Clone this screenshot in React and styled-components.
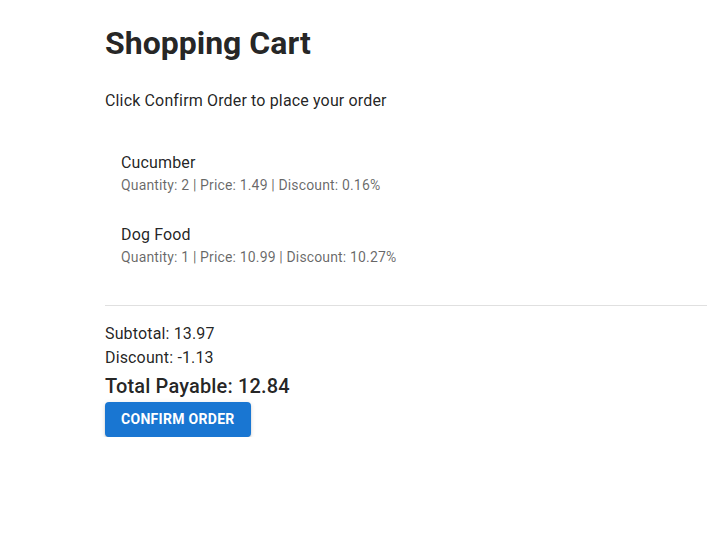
import React from 'react';
import styled, { createGlobalStyle } from 'styled-components';

const GlobalStyle = createGlobalStyle`
  body {
    margin: 0;
    background: #fff;
    font-family: Roboto, "Helvetica", "Arial", sans-serif;
    color: rgba(0, 0, 0, 0.87);
  }
`;

const items = [
  { name: 'Cucumber', quantity: 2, price: '1.49', discount: '0.16%' },
  { name: 'Dog Food', quantity: 1, price: '10.99', discount: '10.27%' },
];

const Page = styled.div`
  padding: 22px 0 0 105px;
`;

const Title = styled.h1`
  margin: 0;
  font-size: 32px;
  font-weight: 700;
  line-height: 42px;
  letter-spacing: 0;
`;

const Intro = styled.p`
  margin: 25px 0 0;
  font-size: 16px;
  line-height: 24px;
  letter-spacing: 0.00938em;
`;

const List = styled.ul`
  list-style: none;
  margin: 16px 0 0;
  padding: 8px 0;
`;

const Item = styled.li`
  padding: 8px 16px;
`;

const ItemText = styled.div`
  margin: 6px 0;
`;

const Primary = styled.span`
  display: block;
  font-size: 16px;
  line-height: 24px;
  letter-spacing: 0.00938em;
`;

const Secondary = styled.p`
  margin: 0;
  font-size: 14px;
  line-height: 20px;
  letter-spacing: 0.01071em;
  color: rgba(0, 0, 0, 0.6);
`;

const Divider = styled.hr`
  margin: 16px 0;
  border: none;
  border-bottom: 1px solid rgba(0, 0, 0, 0.12);
`;

const Line = styled.p`
  margin: 0;
  font-size: ${p => (p.$big ? '20px' : '16px')};
  font-weight: ${p => (p.$big ? 500 : 400)};
  line-height: ${p => (p.$big ? '32px' : '24px')};
  letter-spacing: ${p => (p.$big ? '0.0075em' : '0.00938em')};
`;

const ConfirmButton = styled.button`
  margin-top: 0;
  padding: 6px 16px;
  min-width: 64px;
  border: none;
  border-radius: 4px;
  background: #1976d2;
  color: #fff;
  font-family: Roboto, "Helvetica", "Arial", sans-serif;
  font-size: 14px;
  font-weight: 700;
  line-height: 23px;
  letter-spacing: 0.3px;
  text-transform: uppercase;
  cursor: pointer;
  box-shadow: 0px 3px 1px -2px rgba(0, 0, 0, 0.2), 0px 2px 2px 0px rgba(0, 0, 0, 0.14),
    0px 1px 5px 0px rgba(0, 0, 0, 0.12);
`;

export default function App() {
  return (
    <Page>
      <GlobalStyle />
      <Title>Shopping Cart</Title>
      <Intro>Click Confirm Order to place your order</Intro>
      <List>
        {items.map(item => (
          <Item key={item.name}>
            <ItemText>
              <Primary>{item.name}</Primary>
              <Secondary>
                Quantity: {item.quantity} | Price: {item.price} | Discount: {item.discount}
              </Secondary>
            </ItemText>
          </Item>
        ))}
      </List>
      <Divider />
      <Line>Subtotal: 13.97</Line>
      <Line>Discount: -1.13</Line>
      <Line $big>Total Payable: 12.84</Line>
      <ConfirmButton>Confirm Order</ConfirmButton>
    </Page>
  );
}
